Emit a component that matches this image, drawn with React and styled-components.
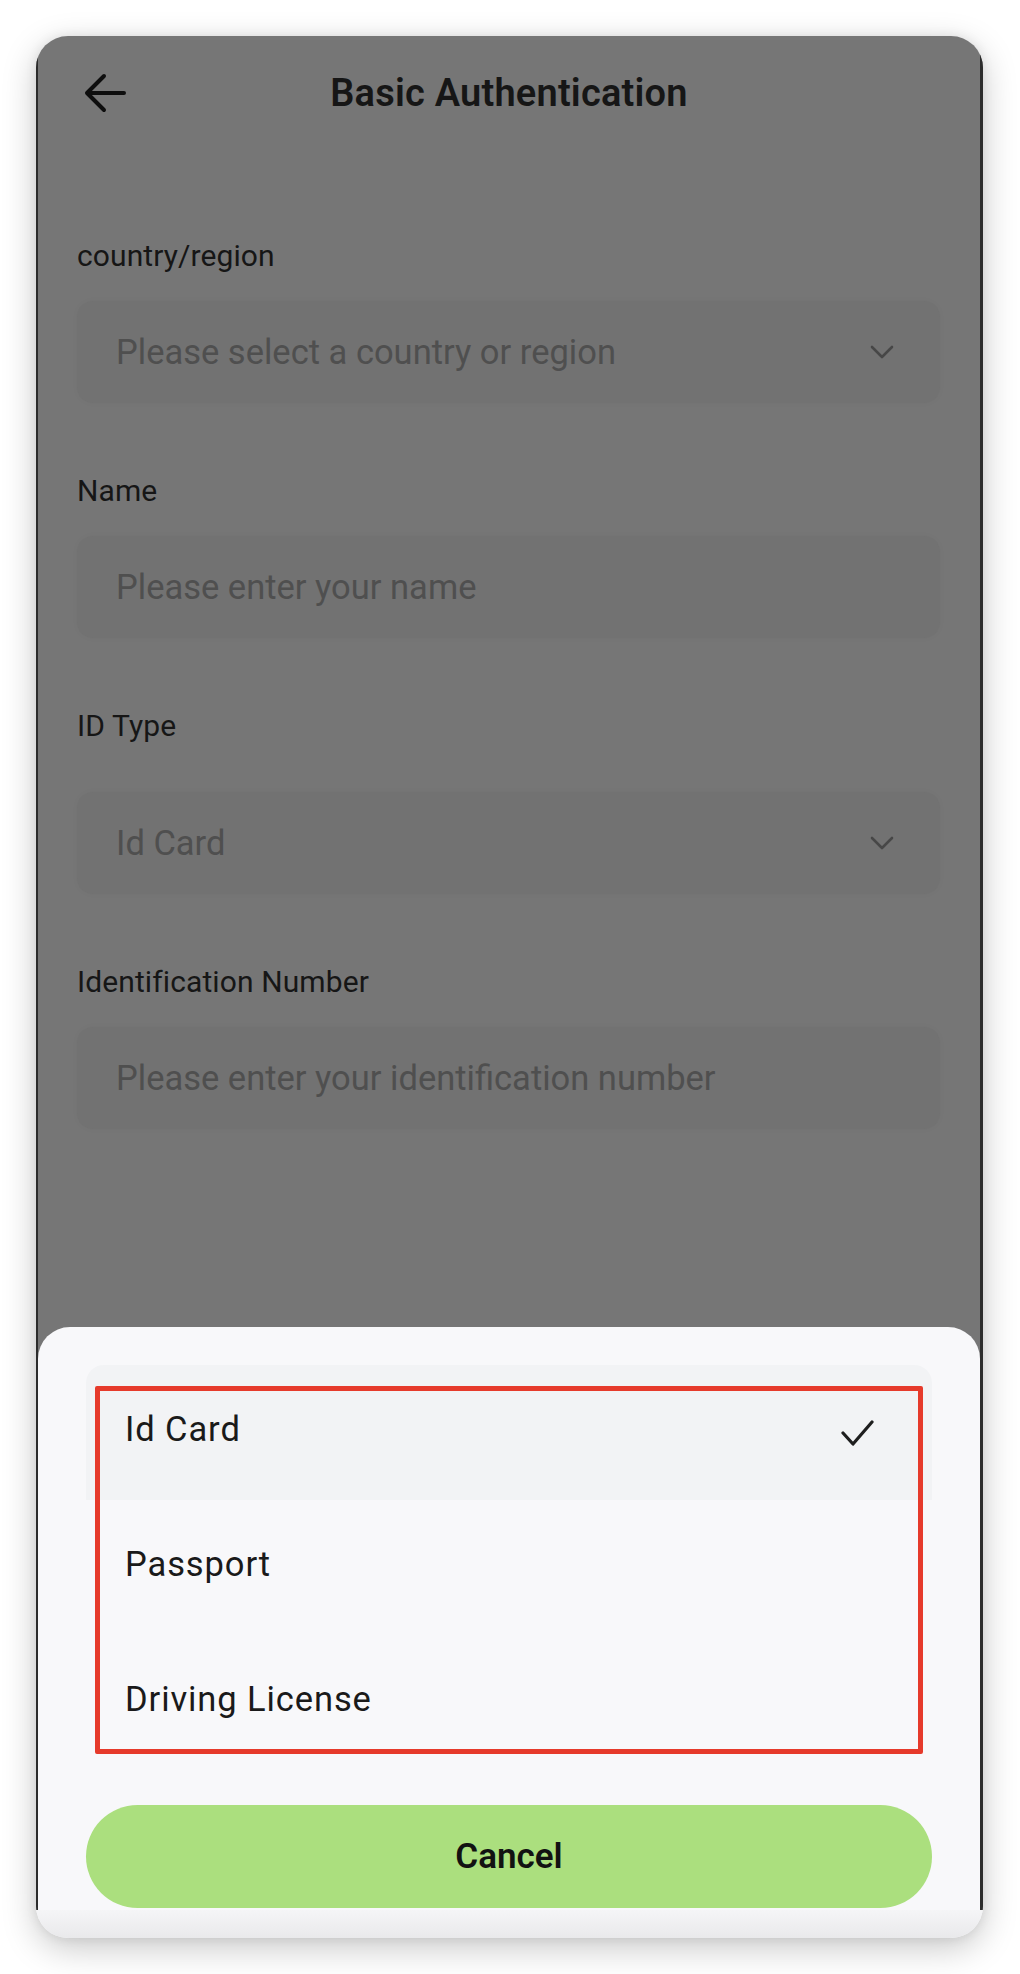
import React from "react";
import styled, { createGlobalStyle } from "styled-components";

const GlobalStyle = createGlobalStyle`
  html, body {
    margin: 0;
    padding: 0;
    background: #ffffff;
  }
  body {
    font-family: Roboto, "Noto Sans", "Liberation Sans", sans-serif;
    -webkit-font-smoothing: antialiased;
  }
  * { box-sizing: border-box; }
`;

const Page = styled.div`
  width: 1020px;
  min-height: 1974px;
  padding: 36px 0 0 36px;
`;

const Frame = styled.div`
  width: 947px;
  height: 1902px;
  background: #f8f8fa;
  border-radius: 32px;
  overflow: hidden;
  display: flex;
  flex-direction: column;
  box-shadow: 0 10px 34px rgba(0, 0, 0, 0.22), 0 0 12px rgba(0, 0, 0, 0.08);
`;

const Screen = styled.div`
  flex: 1;
  background: #767676;
  border-left: 2px solid #2c2c2c;
  border-right: 3px solid #2c2c2c;
  display: flex;
  flex-direction: column;
`;

const BottomBar = styled.div`
  height: 28px;
  flex: none;
  background: linear-gradient(#f5f5f7, #e9e9eb);
`;

const Header = styled.header`
  height: 114px;
  flex: none;
  display: grid;
  grid-template-columns: 120px 1fr 120px;
  align-items: center;
`;

const BackButton = styled.button`
  border: 0;
  background: none;
  padding: 0;
  margin-left: 46px;
  width: 42px;
  height: 40px;
  display: flex;
  align-items: center;
  justify-content: center;
  color: #0e0e0e;
`;

const Title = styled.h1`
  margin: 0;
  text-align: center;
  font-size: 38px;
  font-weight: 600;
  color: #161616;
  letter-spacing: 0.2px;
`;

const Form = styled.div`
  flex: 1;
  padding: 88px 40px 0 39px;
  display: flex;
  flex-direction: column;
  gap: 70px;
`;

const Field = styled.div`
  display: flex;
  flex-direction: column;
  gap: ${(p) => (p.$loose ? "48px" : "27px")};
`;

const Label = styled.div`
  font-size: 30px;
  line-height: 36px;
  color: #161616;
  letter-spacing: 0.1px;
`;

const Box = styled.div`
  height: 102px;
  border-radius: 16px;
  background: #727272;
  box-shadow: 0 0 6px rgba(0, 0, 0, 0.03);
  display: flex;
  align-items: center;
  justify-content: space-between;
  padding: 0 46px 0 39px;
`;

const Placeholder = styled.span`
  font-size: 34.5px;
  color: #4f4f4f;
`;

const Sheet = styled.div`
  flex: none;
  height: 583px;
  background: #f8f8fa;
  border-radius: 32px 32px 0 0;
  padding: 38px 48px 2px 48px;
  display: flex;
  flex-direction: column;
  gap: 35px;
`;

const OptionList = styled.div`
  position: relative;
  border-radius: 18px;
  display: flex;
  flex-direction: column;
`;

const Option = styled.div`
  height: 135px;
  display: flex;
  align-items: center;
  justify-content: space-between;
  padding: 0 58px 8px 39px;
  font-size: 34.5px;
  letter-spacing: 0.9px;
  color: #1a1a1a;
  background: ${(p) => (p.$selected ? "#f2f3f5" : "transparent")};
  border-radius: ${(p) => (p.$selected ? "18px 18px 0 0" : "0")};
`;

const CheckSlot = styled.span`
  display: flex;
  margin-top: 8px;
`;

const Highlight = styled.div`
  position: absolute;
  left: 9px;
  top: 21px;
  width: 828px;
  height: 368px;
  border: 5px solid #e63a2b;
  border-radius: 2px;
  pointer-events: none;
`;

const CancelButton = styled.button`
  height: 103px;
  border: 0;
  border-radius: 52px;
  background: #abdf7e;
  font-family: Roboto, "Noto Sans", "Liberation Sans", sans-serif;
  font-size: 35px;
  font-weight: 600;
  color: #121212;
  flex: none;
`;

const ArrowIcon = () => (
  <svg width="42" height="40" viewBox="0 0 42 40" fill="none">
    <path
      d="M40 20H4M20 3L3 20L20 37"
      stroke="currentColor"
      strokeWidth="4"
      strokeLinecap="round"
      strokeLinejoin="round"
    />
  </svg>
);

const Chevron = () => (
  <svg width="24" height="14" viewBox="0 0 24 14" fill="none">
    <path
      d="M2 2L12 12L22 2"
      stroke="#474747"
      strokeWidth="2.6"
      strokeLinecap="round"
      strokeLinejoin="round"
    />
  </svg>
);

const Check = () => (
  <svg width="33" height="26" viewBox="0 0 33 26" fill="none">
    <path
      d="M2 13L12 24L31 2"
      stroke="#1e1e1e"
      strokeWidth="3.2"
      strokeLinecap="round"
      strokeLinejoin="round"
    />
  </svg>
);

const fields = [
  { label: "country/region", placeholder: "Please select a country or region", select: true },
  { label: "Name", placeholder: "Please enter your name" },
  { label: "ID Type", placeholder: "Id Card", select: true, loose: true },
  { label: "Identification Number", placeholder: "Please enter your identification number" },
];

const options = ["Id Card", "Passport", "Driving License"];

export default function App() {
  return (
    <>
      <GlobalStyle />
      <Page>
        <Frame>
          <Screen>
            <Header>
              <BackButton aria-label="Back">
                <ArrowIcon />
              </BackButton>
              <Title>Basic Authentication</Title>
              <div />
            </Header>
            <Form>
              {fields.map((f) => (
                <Field key={f.label} $loose={f.loose}>
                  <Label>{f.label}</Label>
                  <Box>
                    <Placeholder>{f.placeholder}</Placeholder>
                    {f.select && <Chevron />}
                  </Box>
                </Field>
              ))}
            </Form>
            <Sheet>
              <OptionList>
                {options.map((o, i) => (
                  <Option key={o} $selected={i === 0}>
                    <span>{o}</span>
                    {i === 0 && (
                      <CheckSlot>
                        <Check />
                      </CheckSlot>
                    )}
                  </Option>
                ))}
                <Highlight />
              </OptionList>
              <CancelButton>Cancel</CancelButton>
            </Sheet>
          </Screen>
          <BottomBar />
        </Frame>
      </Page>
    </>
  );
}
